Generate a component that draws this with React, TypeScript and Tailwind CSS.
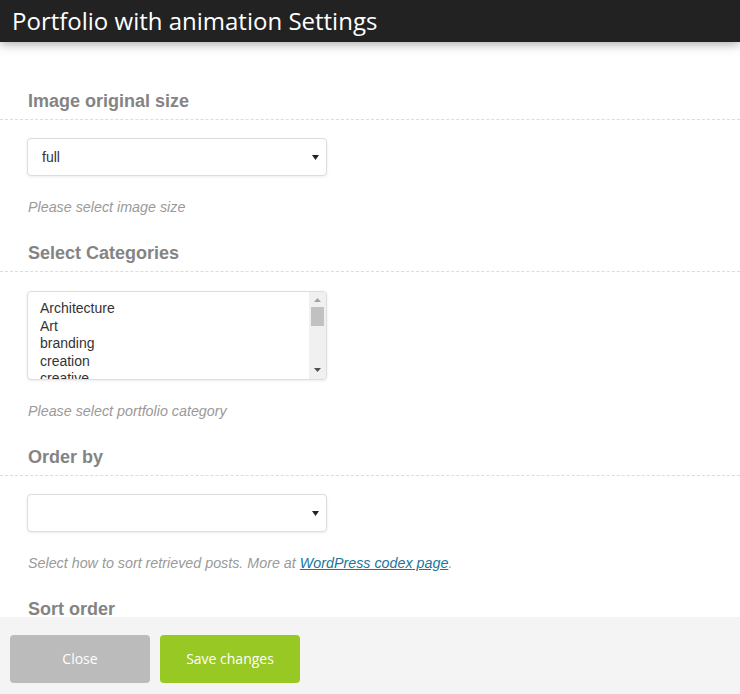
import React from "react";

const sans = "font-['Liberation_Sans',Arial,sans-serif]";
const open = "font-['Open_Sans',sans-serif]";

function Caret() {
  return (
    <svg width="7" height="5" viewBox="0 0 7 5" className="shrink-0">
      <path d="M0 0 H7 L3.5 5 Z" fill="#222" />
    </svg>
  );
}

function SectionTitle({ children }: { children: React.ReactNode }) {
  return (
    <div className="border-b border-dashed border-[#dcdcdc] pb-[6px]">
      <h3 className={`${sans} px-7 text-[18px] font-bold leading-6 text-[#848484]`}>{children}</h3>
    </div>
  );
}

function Help({ children }: { children: React.ReactNode }) {
  return <p className={`${sans} mt-[21px] px-7 text-[14.3px] italic leading-5 text-[#9a9a9a]`}>{children}</p>;
}

function FakeSelect({ value }: { value: string }) {
  return (
    <div className="px-[27px]">
      <div className={`${sans} flex h-[38px] w-[300px] items-center justify-between rounded border border-[#dddddd] bg-white pl-[14px] pr-[7px] text-[14px] text-[#333] shadow-[0_1px_3px_rgba(0,0,0,0.08)]`}>
        <span>{value}</span>
        <Caret />
      </div>
    </div>
  );
}

export default function App() {
  const categories = ["Architecture", "Art", "branding", "creation", "creative"];

  return (
    <div className="flex h-[694px] w-[740px] flex-col overflow-hidden bg-white">
      {/* Header */}
      <div className="relative z-10 flex h-[42px] shrink-0 items-center bg-[#222222] px-3 shadow-[0_2px_10px_rgba(0,0,0,0.35)]">
        <h1 className={`${open} text-2xl leading-none text-white`}>Portfolio with animation Settings</h1>
      </div>

      {/* Body */}
      <div className="flex-1 overflow-hidden pt-[47px]">
        <SectionTitle>Image original size</SectionTitle>
        <div className="mt-[18px]">
          <FakeSelect value="full" />
        </div>
        <Help>Please select image size</Help>

        <div className="mt-6">
          <SectionTitle>Select Categories</SectionTitle>
        </div>
        <div className="mt-[19px] px-[27px]">
          <div className="flex h-[89px] w-[300px] overflow-hidden rounded border border-[#dddddd] bg-white shadow-[0_1px_3px_rgba(0,0,0,0.08)]">
            <ul className={`${sans} flex-1 pl-3 pt-[8px] text-[14px] leading-[17.6px] text-[#333]`}>
              {categories.map((c) => (
                <li key={c}>{c}</li>
              ))}
            </ul>
            <div className="flex w-[17px] flex-col items-center bg-[#f0f0f0]">
              <svg width="7" height="4" viewBox="0 0 7 4" className="mt-[6px]">
                <path d="M0 4 H7 L3.5 0 Z" fill="#a3a3a3" />
              </svg>
              <div className="mt-[5px] h-[19px] w-[13px] bg-[#c1c1c1]" />
              <div className="flex-1" />
              <svg width="7" height="4" viewBox="0 0 7 4" className="mb-[7px]">
                <path d="M0 0 H7 L3.5 4 Z" fill="#505050" />
              </svg>
            </div>
          </div>
        </div>
        <Help>Please select portfolio category</Help>

        <div className="mt-6">
          <SectionTitle>Order by</SectionTitle>
        </div>
        <div className="mt-[18px]">
          <FakeSelect value="" />
        </div>
        <Help>
          Select how to sort retrieved posts. More at{" "}
          <a href="#" className="text-[#21759b] underline">
            WordPress codex page
          </a>
          .
        </Help>

        <div className="mt-6">
          <SectionTitle>Sort order</SectionTitle>
        </div>
      </div>

      {/* Footer */}
      <div className="flex h-[77px] shrink-0 gap-[10px] bg-[#f4f4f4] px-[10px] pt-[18px]">
        <button className={`${open} h-12 w-[140px] rounded bg-[#bbbbbb] text-sm text-white`}>Close</button>
        <button className={`${open} h-12 w-[140px] rounded bg-[#97c824] text-sm text-white`}>Save changes</button>
      </div>
    </div>
  );
}
